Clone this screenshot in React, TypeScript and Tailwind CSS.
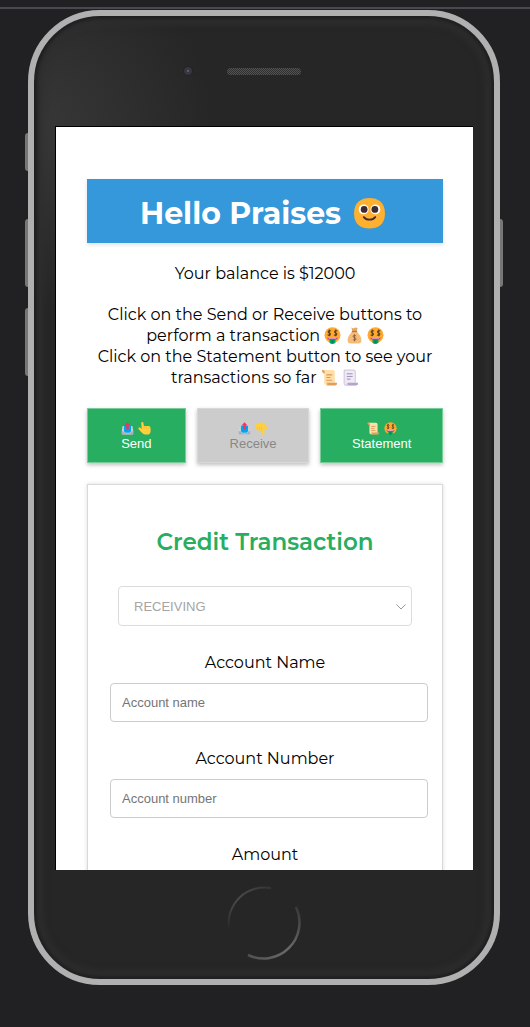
import type { ReactNode } from "react";

function Emoji({ label, className, children }: { label: string; className: string; children: ReactNode }) {
  return (
    <svg role="img" aria-label={label} viewBox="0 0 32 32" className={className}>
      {children}
    </svg>
  );
}

const textEmoji = "inline-block size-[17px] align-[-3px]";
const smallEmoji = "size-[13px]";

function Smile() {
  return (
    <Emoji label="smiling face" className="mt-1 size-[33px]">
      <path d="M16 30.500C24 30.500 31 27 31 16C31 5 24 1 16 1C8 1 1 5 1 16C1 27 8 30.500 16 30.500Z" fill="#ffb02e" />
      <circle cx="10.300" cy="12" r="4.800" fill="#fff" />
      <circle cx="21.700" cy="12" r="4.800" fill="#fff" />
      <circle cx="10.800" cy="12" r="3.300" fill="#402a32" />
      <circle cx="21.200" cy="12" r="3.300" fill="#402a32" />
      <path d="M10.500 19.500C13 22.800 19 22.800 21.500 19.500" fill="none" stroke="#402a32" strokeWidth="1.800" strokeLinecap="round" />
    </Emoji>
  );
}

function MoneyFace({ className = textEmoji }: { className?: string }) {
  return (
    <Emoji label="money face" className={className}>
      <circle cx="16" cy="15.500" r="15" fill="#ffa92e" />
      <g fill="none" stroke="#5d401d" strokeWidth="2">
        <path d="M13 8Q11 5.500 8.500 7.500Q6.500 10 10 11.200Q13.500 12.500 11.500 15Q9 17 7 14.500M10 4.500V17.500" />
        <path d="M25 8Q23 5.500 20.500 7.500Q18.500 10 22 11.200Q25.500 12.500 23.500 15Q21 17 19 14.500M22 4.500V17.500" />
      </g>
      <path d="M6 20H26Q25 24 20 24H12Q7 24 6 20Z" fill="#bb1d80" />
      <path d="M8 20H24L23 21.500H9Z" fill="#fff" />
      <path d="M10.500 23H21.500V29Q19 32 16 32Q12 32 10.500 29Z" fill="#00a65c" />
      <path d="M14 25H18V30H14Z" fill="#008463" />
    </Emoji>
  );
}

function MoneyBag() {
  return (
    <Emoji label="money bag" className={textEmoji}>
      <path d="M10 1L14 3L17 1L22 2L20 8H12Z" fill="#e5a765" />
      <path d="M12 8H20C23 12 29 17 29 25Q29 31 23 31H9Q3 31 3 25C3 17 9 12 12 8Z" fill="#f3bd78" />
      <path d="M11 8.500H21" stroke="#b97745" strokeWidth="2.500" />
      <path d="M19 17Q16 14 13.500 16.500Q12 19 16 20Q20.500 21 18.500 24Q16 26 13 23.500M16 14V27" fill="none" stroke="#8c5543" strokeWidth="1.600" />
    </Emoji>
  );
}

function Scroll({ className = textEmoji }: { className?: string }) {
  return (
    <Emoji label="scroll" className={className}>
      <path d="M2 2H22Q26 2 26 6V30H9Q6 30 6 26V6Q6 3 2 5Z" fill="#ffdea7" />
      <path d="M2 2Q6 1 7 5V8H4Q1 5 2 2Z" fill="#e39d5b" />
      <path d="M10 26H30Q31 31 26 31H10Q14 29 10 26Z" fill="#e39d5b" />
      <path d="M10 11H21M10 16H18M10 21H21" stroke="#dc9b57" strokeWidth="2" />
    </Emoji>
  );
}

function CurledPage() {
  return (
    <Emoji label="page" className={textEmoji}>
      <path d="M4 2H23Q25 2 25 4V27H30Q30 31 26 31H8Q4 31 4 27Z" fill="#f0eaf7" />
      <path d="M10 26H30Q31 31 26 31H9Q12 30 10 26Z" fill="#b4a4cb" />
      <path d="M10 27Q10 31 7 31Q4 31 4 27V2H23Q25 2 25 4V26" fill="none" stroke="#c7bad7" strokeWidth="1.600" />
      <path d="M9 9H20M9 14H20M9 19H16" stroke="#998eb0" strokeWidth="1.800" />
    </Emoji>
  );
}

function Outbox() {
  return (
    <Emoji label="outbox" className={smallEmoji}>
      <path d="M4 10H28L30 22V29Q30 31 28 31H4Q2 31 2 29V22Z" fill="#d3d3d3" />
      <path d="M7 9H25V24L21 27H11L7 24Z" fill="#00a6ed" />
      <path d="M2 23H7L11 27H21L25 23H30V29Q30 31 28 31H4Q2 31 2 29Z" fill="#a8afc2" />
      <path d="M6 10V23L11 27H21L26 23V10" fill="none" stroke="#c6d5e2" strokeWidth="1.500" />
      <path d="M16 1L22 8H18.500V18H13.500V8H10Z" fill="#f8315d" stroke="#f8315d" strokeWidth="1" />
    </Emoji>
  );
}

function Hand({ down = false }: { down?: boolean }) {
  return (
    <Emoji label={down ? "pointing down" : "pointing up"} className={smallEmoji}>
      {down ? (
        <>
          <path
            d="M9 2H22Q26 4 28 10L31 16Q31 20 28 19L23 16V28Q23 32 20 32Q17 32 17 28L16 21Q13 23 11 20Q7 22 6 18Q1 19 1 14V9Q3 2 9 2Z"
            fill="#ffcf3e"
          />
          <path d="M6 18V11M11 20V12M16 21V13" fill="none" stroke="#f4af31" strokeWidth="1" />
        </>
      ) : (
        <>
          <path
            d="M8 3Q8 0 10.500 0Q13 0 13.500 3L14.500 10H26Q31 10 31 16V22Q31 31 22 31H17Q12 30 9 26L1.500 18Q0 15 2 13.500Q4 12 9 17Z"
            fill="#ffcf3e"
          />
          <path d="M15 10V17M20.500 10V17M26 10V17" fill="none" stroke="#f4af31" strokeWidth="1" />
        </>
      )}
    </Emoji>
  );
}

function ActionButton({ icons, children, disabled = false }: { icons: ReactNode; children: ReactNode; disabled?: boolean }) {
  return (
    <button
      type="button"
      disabled={disabled}
      className="flex h-[55px] flex-col items-center justify-center border border-[#7acb9b] bg-[#27ae60] font-['Liberation_Sans',Arial,sans-serif] text-[13px] leading-[15px] text-white shadow-[0_2px_4px_rgba(0,0,0,0.25)] disabled:border-[#d8d8d8] disabled:bg-[#ccc] disabled:text-[#888]"
    >
      <span className="flex h-[15px] items-center gap-1">{icons}</span>
      <span>{children}</span>
    </button>
  );
}

function Field({ id, label, placeholder }: { id: string; label: string; placeholder: string }) {
  return (
    <div className="mt-[26px]">
      <label htmlFor={id} className="block text-center">
        {label}
      </label>
      <div className="mt-2.5 pr-3.5 pl-[22px]">
        <input
          id={id}
          type="text"
          placeholder={placeholder}
          className="block h-[39px] w-full rounded-[4px] border border-[#ccc] bg-white px-[11px] font-['Liberation_Sans',Arial,sans-serif] text-[13px] placeholder:text-[#757575]"
        />
      </div>
    </div>
  );
}

function BankPage() {
  return (
    <main className="min-h-0 flex-1 overflow-hidden border-t border-l border-black bg-white pt-[52px] pr-[30px] pl-[31px] text-[16px] leading-[21px] text-black">
      <h1 className="flex h-16 items-center justify-center gap-3 bg-[#3498db] pr-1 text-[30px] font-bold text-white shadow-[0_2px_4px_rgba(0,0,0,0.12)]">
        <span className="pt-1">Hello Praises</span> <Smile />
      </h1>
      <p className="mt-5 text-center">Your balance is $12000</p>
      <p className="-mx-2 mt-5 text-center whitespace-nowrap">
        Click on the Send or Receive buttons to
        <br />
        perform a transaction <MoneyFace /> <MoneyBag /> <MoneyFace />
        <br />
        Click on the Statement button to see your
        <br />
        transactions so far <Scroll /> <CurledPage />
      </p>
      <div className="mt-5 grid grid-cols-[99fr_113fr_123fr] gap-[11px]">
        <ActionButton icons={<><Outbox /><Hand /></>}>Send</ActionButton>
        <ActionButton icons={<><Outbox /><Hand down /></>} disabled>
          Receive
        </ActionButton>
        <ActionButton icons={<><Scroll className={smallEmoji} /><MoneyFace className={smallEmoji} /></>}>Statement</ActionButton>
      </div>
      <form className="mt-[21px] border border-[#d9d9d9] pt-[43px] pb-10 shadow-[0_0_4px_rgba(0,0,0,0.14)]">
        <h2 className="text-center text-[23px] leading-7 font-semibold text-[#27ae60]">Credit Transaction</h2>
        <div className="relative mx-[30px] mt-[30px]">
          <select
            aria-label="Transaction type"
            disabled
            className="block h-10 w-full appearance-none rounded-[4px] border border-[#dcdcdc] bg-white px-[15px] font-['Liberation_Sans',Arial,sans-serif] text-[13px] text-[#a5a5a5] opacity-100"
          >
            <option>RECEIVING</option>
          </select>
          <svg viewBox="0 0 10 6" className="pointer-events-none absolute top-[18px] right-1.5 h-1.5 w-2.5" fill="none" stroke="#999">
            <path d="M0.500 0.500L5 5L9.500 0.500" />
          </svg>
        </div>
        <Field id="account-name" label="Account Name" placeholder="Account name" />
        <Field id="account-number" label="Account Number" placeholder="Account number" />
        <Field id="amount" label="Amount" placeholder="Amount" />
      </form>
    </main>
  );
}

function HomeButton() {
  return (
    <svg viewBox="0 0 76 76" className="size-[76px]" fill="none" aria-hidden="true">
      <defs>
        <linearGradient id="upper" x1="0" y1="1" x2="1" y2="0">
          <stop offset="0" stopColor="#666" stopOpacity="0" />
          <stop offset="0.500" stopColor="#484848" />
          <stop offset="1" stopColor="#555" stopOpacity="0.300" />
        </linearGradient>
        <linearGradient id="lower" x1="1" y1="0" x2="0" y2="1">
          <stop offset="0" stopColor="#777" stopOpacity="0.200" />
          <stop offset="0.500" stopColor="#686868" />
          <stop offset="1" stopColor="#888" stopOpacity="0.400" />
        </linearGradient>
      </defs>
      <path d="M3 44A36 36 0 0 1 45 3" stroke="url(#upper)" strokeWidth="2" />
      <path d="M70 22A36 36 0 0 1 22 70" stroke="url(#lower)" strokeWidth="2.500" />
    </svg>
  );
}

export default function App() {
  return (
    <div className="flex h-screen flex-col bg-[#212123] font-[Montserrat,Inter,sans-serif]">
      <div className="mt-[7px] h-0.5 shrink-0 bg-[#474a4e]" />
      <div className="relative mt-px mr-[30px] mb-[42px] ml-7 flex min-h-0 flex-1 flex-col rounded-[72px] border-[6px] border-[#b0b0b0] bg-[#262626] bg-[radial-gradient(circle_at_0_12%,#383838_0,#262626_180px)] px-[21px] shadow-[inset_0_0_3px_3px_#1f2021,inset_0_0_7px_8px_#2e2e2e]">
        <span className="absolute top-[117px] -left-[9px] h-[38px] w-[3px] rounded-l-sm bg-[#777]" />
        <span className="absolute top-[203px] -left-[9px] h-[68px] w-[3px] rounded-l-sm bg-[#777]" />
        <span className="absolute top-[292px] -left-[9px] h-[68px] w-[3px] rounded-l-sm bg-[#777]" />
        <span className="absolute top-[203px] -right-[9px] h-[68px] w-[3px] rounded-r-sm bg-[#777]" />
        <div className="grid h-[110px] shrink-0 grid-cols-[1fr_74px_1fr] items-center">
          <span className="mr-[34px] size-2.5 justify-self-end rounded-full bg-[radial-gradient(circle,#77777d_0,#30303b_25%,#3c3c42_45%,#20202a_65%)]" />
          <span className="h-[7px] rounded-full bg-[#444] bg-[repeating-conic-gradient(#303030_0_25%,#525252_0_50%)] bg-[length:2px_2px]" />
        </div>
        <BankPage />
        <div className="flex h-[109px] shrink-0 items-center justify-center pb-1">
          <HomeButton />
        </div>
      </div>
    </div>
  );
}
